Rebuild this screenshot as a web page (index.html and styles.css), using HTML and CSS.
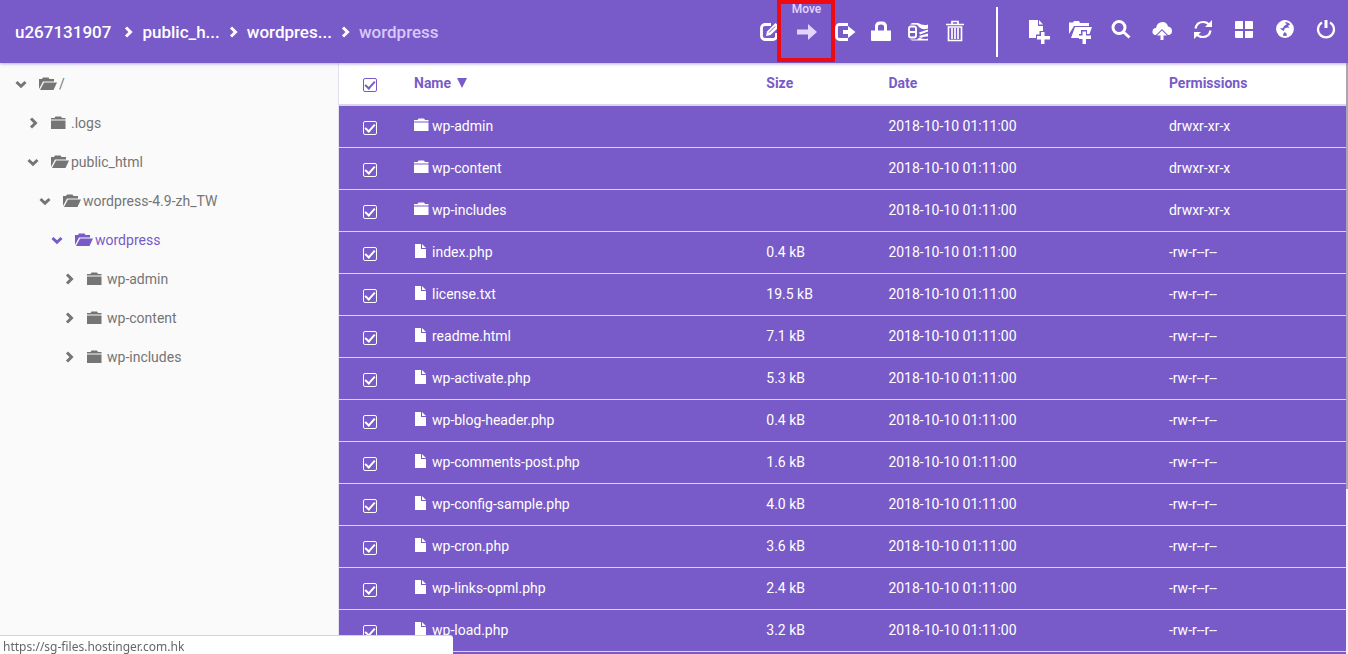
FILE: index.html
```html
<!DOCTYPE html>
<html lang="en">
<head>
<meta charset="utf-8">
<meta name="viewport" content="width=device-width, initial-scale=1">
<title>File manager</title>
<link rel="stylesheet" href="styles.css">
</head>
<body>
<svg class="sprite" aria-hidden="true">
  <symbol id="right" viewBox="0 0 12 12"><path d="M4 1.500 8.500 6 4 10.500" fill="none" stroke="currentColor" stroke-width="3"/></symbol>
  <symbol id="down" viewBox="0 0 12 12"><path d="M1.500 4 6 8.300 10.500 4" fill="none" stroke="currentColor" stroke-width="3"/></symbol>
  <symbol id="folder" viewBox="0 0 18 14"><path d="M0 3.500V2h3.500l1-1.500H10L11 2h3.500v1.500ZM0 4.500h14.500V13H0Z"/></symbol>
  <symbol id="open" viewBox="0 0 18 14"><path d="M0 12V2h3l1-1.500h5.500l1 1.500H15v2.500H4ZM5 5.500h13L14.500 13H1Z"/></symbol>
  <symbol id="file" viewBox="0 0 18 14"><path d="M1 0h6v5h5v9H1ZM8 0l4 4H8Z"/></symbol>
  <symbol id="edit" viewBox="0 0 24 24"><path d="M13 4.500H7A3.500 3.500 0 0 0 3.500 8v8A3.500 3.500 0 0 0 7 19.500h8a3.500 3.500 0 0 0 3.500-3.500v-3" fill="none" stroke="currentColor" stroke-width="2.800"/><path d="m8 16 1-4.500L17.500 3l4 3.500-9 8.500Z"/><path d="m11 12.500 6-6" stroke="#785bc8" stroke-width="1"/></symbol>
  <symbol id="move" viewBox="0 0 24 24"><path d="M2 9.500h11V4l9 8-9 8v-5.500H2Z"/></symbol>
  <symbol id="export" viewBox="0 0 24 24"><path d="M16 4.500H7.500a3 3 0 0 0-3 3v9a3 3 0 0 0 3 3H16" fill="none" stroke="currentColor" stroke-width="2.800"/><path d="M11 10h5V6l7.500 6-7.500 6v-4h-5Z"/></symbol>
  <symbol id="lock" viewBox="0 0 24 24"><path d="M2 10.500h4V6a4.500 4.500 0 0 1 4.500-4.500h3A4.500 4.500 0 0 1 18 6v4.500h4V20q0 1-1 1H3q-1 0-1-1ZM9 10.500h6V6.500Q15 4.500 12 4.500T9 6.500Z"/></symbol>
  <symbol id="rename" viewBox="0 0 24 24"><path d="M3 8.500q0-2 2-2h3q2 0 2 2v7q0 2-2 2H5q-2 0-2-2ZM3 12h7" fill="none" stroke="currentColor" stroke-width="1.900"/><path d="M4 4.500 6 3h6q5 3 10 1.500v4q-5 2-8.500-1L11 4.800ZM13 12.500l9-3v2l-8 3ZM13 16l9-2.500v3q-5-.5-7 1.500ZM4 19.500h7l2.500-2q4 2.500 8.500 1v2H6Z"/></symbol>
  <symbol id="trash" viewBox="0 0 24 24"><path d="M3 4.500h18M9 4V1.500h6V4M5.500 7h13v13.500h-13ZM9 8v11M12 8v11M15 8v11" fill="none" stroke="currentColor" stroke-width="1.700"/></symbol>
  <symbol id="newfile" viewBox="0 0 24 28"><path d="M2 4h9v6h5v5h-3.500v3.500H9V22H2ZM12 4l4 4.500h-4ZM14 16h3.500v4H23v3.500h-5.500V28H14v-4.500h-4V20h4Z"/></symbol>
  <symbol id="newfolder" viewBox="0 0 24 28"><path d="M1 18V6.500h4L6 5h5l1 2h9v3H6ZM7 11h17l-2.500 7H19v-4h-6v4h-2v4H3ZM14.500 15.500H18v4h5V23h-5v5h-3.500v-5H11v-3.500h3.500Z"/></symbol>
  <symbol id="search" viewBox="0 0 24 24"><path d="M16 9.500a6 6 0 1 1-12 0 6 6 0 0 1 12 0ZM14.500 14 20.500 19.500" fill="none" stroke="currentColor" stroke-width="3"/></symbol>
  <symbol id="upload" viewBox="0 0 24 24"><path d="M6 17Q2 17 2.500 13 3 10 6 10q1-6 6.500-6Q17 4 18 8.500q4 .5 4 4.500t-4 4l-6-6ZM12 12.500l5 5h-3.500V22h-3v-4.500H7Z"/></symbol>
  <symbol id="refresh" viewBox="0 0 24 24"><path d="M4.500 10.500q1-6.500 8-6.500 3.500 0 6 3M19.500 12.500q-1 6.500-8 6.500-3.500 0-6-3" fill="none" stroke="currentColor" stroke-width="2.200"/><path d="M21 2v7h-7ZM3 21v-7h7Z"/></symbol>
  <symbol id="grid" viewBox="0 0 24 24"><path d="M4 3h7v8H3V4q0-1 1-1ZM13 3h7q1 0 1 1v7h-8ZM3 13h8v7H4q-1 0-1-1ZM13 13h8v6q0 1-1 1h-7Z"/></symbol>
  <symbol id="globe" viewBox="0 0 24 24"><circle cx="12" cy="11" r="8" fill="none" stroke="currentColor" stroke-width="1.800"/><path d="m5 6 5-3.500h4L12 5l2 1-3 2-1 2-3 .5 2 1.500 3 1.500-1.500 2L9.500 19l-3-1-2-4-1-3ZM15 8l3-2.500 2 3v5l-3 4-3 1-.5-3-2.500-2 .5-3 3-1 2 .5Z"/></symbol>
  <symbol id="power" viewBox="0 0 24 24"><path d="M8 4.500a8 8 0 1 0 8 0" fill="none" stroke="currentColor" stroke-width="2.200"/><path d="M10.500 2h3v8h-3Z"/></symbol>
</svg>

<header class="topbar">
  <nav class="crumbs" aria-label="Path">
    <a href="#" class="root">u267131907</a><svg><use href="#right"/></svg>
    <a href="#">public_h...</a><svg><use href="#right"/></svg>
    <a href="#">wordpres...</a><svg><use href="#right"/></svg>
    <a href="#" class="current">wordpress</a>
  </nav>
  <div class="tools selection-tools">
    <button aria-label="Edit"><svg><use href="#edit"/></svg></button>
    <button class="active"><span class="tip">Move</span><svg><use href="#move"/></svg></button>
    <button aria-label="Copy"><svg><use href="#export"/></svg></button>
    <button aria-label="Permissions"><svg><use href="#lock"/></svg></button>
    <button aria-label="Archive"><svg><use href="#rename"/></svg></button>
    <button aria-label="Delete"><svg><use href="#trash"/></svg></button>
  </div>
  <div class="tools global-tools">
    <button aria-label="New file"><svg class="tall"><use href="#newfile"/></svg></button>
    <button aria-label="New folder"><svg class="tall"><use href="#newfolder"/></svg></button>
    <button aria-label="Search"><svg><use href="#search"/></svg></button>
    <button aria-label="Upload"><svg><use href="#upload"/></svg></button>
    <button aria-label="Refresh"><svg><use href="#refresh"/></svg></button>
    <button aria-label="Grid view"><svg><use href="#grid"/></svg></button>
    <button aria-label="Language"><svg><use href="#globe"/></svg></button>
    <button aria-label="Log out"><svg><use href="#power"/></svg></button>
  </div>
</header>

<div class="workspace">
  <aside class="sidebar">
    <ul class="tree">
      <li><a href="#"><svg class="chevron"><use href="#down"/></svg><svg class="icon"><use href="#open"/></svg>/</a>
        <ul>
          <li><a href="#"><svg class="chevron"><use href="#right"/></svg><svg class="icon"><use href="#folder"/></svg>.logs</a></li>
          <li><a href="#"><svg class="chevron"><use href="#down"/></svg><svg class="icon"><use href="#open"/></svg>public_html</a>
            <ul>
              <li><a href="#"><svg class="chevron"><use href="#down"/></svg><svg class="icon"><use href="#open"/></svg>wordpress-4.9-zh_TW</a>
                <ul>
                  <li><a href="#" class="selected"><svg class="chevron"><use href="#down"/></svg><svg class="icon"><use href="#open"/></svg>wordpress</a>
                    <ul>
                      <li><a href="#"><svg class="chevron"><use href="#right"/></svg><svg class="icon"><use href="#folder"/></svg>wp-admin</a></li>
                      <li><a href="#"><svg class="chevron"><use href="#right"/></svg><svg class="icon"><use href="#folder"/></svg>wp-content</a></li>
                      <li><a href="#"><svg class="chevron"><use href="#right"/></svg><svg class="icon"><use href="#folder"/></svg>wp-includes</a></li>
                    </ul>
                  </li>
                </ul>
              </li>
            </ul>
          </li>
        </ul>
      </li>
    </ul>
  </aside>
  <main class="files">
    <table>
      <colgroup><col class="c-check"><col class="c-name"><col class="c-size"><col class="c-date"><col class="c-perm"></colgroup>
      <thead>
        <tr><th><input type="checkbox" checked aria-label="Select all"></th><th>Name <svg class="sort" viewBox="0 0 10 10"><path d="M0 0h10L5 10Z"/></svg></th><th>Size</th><th>Date</th><th>Permissions</th></tr>
      </thead>
      <tbody>
        <tr><td><input type="checkbox" checked aria-label="wp-admin"></td><td><svg class="icon"><use href="#folder"/></svg>wp-admin</td><td></td><td>2018-10-10 01:11:00</td><td>drwxr-xr-x</td></tr>
        <tr><td><input type="checkbox" checked aria-label="wp-content"></td><td><svg class="icon"><use href="#folder"/></svg>wp-content</td><td></td><td>2018-10-10 01:11:00</td><td>drwxr-xr-x</td></tr>
        <tr><td><input type="checkbox" checked aria-label="wp-includes"></td><td><svg class="icon"><use href="#folder"/></svg>wp-includes</td><td></td><td>2018-10-10 01:11:00</td><td>drwxr-xr-x</td></tr>
        <tr><td><input type="checkbox" checked aria-label="index.php"></td><td><svg class="icon"><use href="#file"/></svg>index.php</td><td>0.4 kB</td><td>2018-10-10 01:11:00</td><td>-rw-r--r--</td></tr>
        <tr><td><input type="checkbox" checked aria-label="license.txt"></td><td><svg class="icon"><use href="#file"/></svg>license.txt</td><td>19.5 kB</td><td>2018-10-10 01:11:00</td><td>-rw-r--r--</td></tr>
        <tr><td><input type="checkbox" checked aria-label="readme.html"></td><td><svg class="icon"><use href="#file"/></svg>readme.html</td><td>7.1 kB</td><td>2018-10-10 01:11:00</td><td>-rw-r--r--</td></tr>
        <tr><td><input type="checkbox" checked aria-label="wp-activate.php"></td><td><svg class="icon"><use href="#file"/></svg>wp-activate.php</td><td>5.3 kB</td><td>2018-10-10 01:11:00</td><td>-rw-r--r--</td></tr>
        <tr><td><input type="checkbox" checked aria-label="wp-blog-header.php"></td><td><svg class="icon"><use href="#file"/></svg>wp-blog-header.php</td><td>0.4 kB</td><td>2018-10-10 01:11:00</td><td>-rw-r--r--</td></tr>
        <tr><td><input type="checkbox" checked aria-label="wp-comments-post.php"></td><td><svg class="icon"><use href="#file"/></svg>wp-comments-post.php</td><td>1.6 kB</td><td>2018-10-10 01:11:00</td><td>-rw-r--r--</td></tr>
        <tr><td><input type="checkbox" checked aria-label="wp-config-sample.php"></td><td><svg class="icon"><use href="#file"/></svg>wp-config-sample.php</td><td>4.0 kB</td><td>2018-10-10 01:11:00</td><td>-rw-r--r--</td></tr>
        <tr><td><input type="checkbox" checked aria-label="wp-cron.php"></td><td><svg class="icon"><use href="#file"/></svg>wp-cron.php</td><td>3.6 kB</td><td>2018-10-10 01:11:00</td><td>-rw-r--r--</td></tr>
        <tr><td><input type="checkbox" checked aria-label="wp-links-opml.php"></td><td><svg class="icon"><use href="#file"/></svg>wp-links-opml.php</td><td>2.4 kB</td><td>2018-10-10 01:11:00</td><td>-rw-r--r--</td></tr>
        <tr><td><input type="checkbox" checked aria-label="wp-load.php"></td><td><svg class="icon"><use href="#file"/></svg>wp-load.php</td><td>3.2 kB</td><td>2018-10-10 01:11:00</td><td>-rw-r--r--</td></tr>
        <tr><td></td><td></td><td></td><td></td><td></td></tr>
      </tbody>
    </table>
  </main>
  <div class="rail"><div class="thumb"></div></div>
</div>
<div class="status">https://sg-files.hostinger.com.hk</div>
</body>
</html>
```
FILE: styles.css
```css
*, *::before, *::after { box-sizing: border-box; }

body {
  margin: 0;
  height: 100vh;
  overflow: hidden;
  display: flex;
  flex-direction: column;
  font: 14px/20px Roboto, sans-serif;
  color: #757575;
  background: #fafafa;
}

a { color: inherit; text-decoration: none; }
svg { fill: currentColor; flex: none; }
.sprite { position: absolute; width: 0; height: 0; }

.topbar {
  display: flex;
  align-items: center;
  height: 63px;
  flex: none;
  padding: 0 2px 0 15px;
  background: #785bc8;
  color: #fff;
  box-shadow: 0 1px 3px #785bc880;
  position: relative;
}

.crumbs {
  display: flex;
  align-items: center;
  gap: 7px;
  margin-right: auto;
  font-size: 17px;
  font-weight: 500;
}
.crumbs svg { width: 12px; height: 12px; margin-right: 1px; }
.crumbs .root { margin-right: 4px; }
.crumbs .current { color: #d9c8fa; }

.tools { display: flex; align-items: center; }
.tools button {
  position: relative;
  display: flex;
  align-items: center;
  justify-content: center;
  height: 63px;
  padding: 0;
  border: 0;
  background: none;
  color: inherit;
  font: inherit;
}
.tools svg { width: 24px; height: 24px; }
.tools .tall { height: 28px; }

.selection-tools { padding-right: 23px; }
.selection-tools button { width: 37px; }
.selection-tools .active { color: #e3d5ff; }
.active::after {
  content: "";
  position: absolute;
  z-index: 1;
  top: 0;
  left: -11px;
  width: 58px;
  height: 62px;
  border: 4px solid #ee0a12;
}
.tip {
  position: absolute;
  top: 0;
  font-size: 12px;
  font-weight: 500;
  line-height: 18px;
}

.global-tools {
  height: 50px;
  padding-left: 20px;
  border-left: 2px solid #fff;
}
.global-tools button { width: 41px; height: 50px; padding-bottom: 3px; }

.workspace { display: flex; flex: 1; min-height: 0; }
.sidebar { width: 338px; flex: none; padding-top: 1px; }

.tree, .tree ul { list-style: none; margin: 0; padding: 0; }
.tree { padding-left: 15px; }
.tree ul { padding-left: 12px; }
.tree a { display: flex; align-items: center; height: 39px; }
.tree .selected { color: #785bc8; }
.chevron { width: 12px; height: 12px; margin-right: 12px; }
.icon { width: 18px; height: 14px; }
.tree .icon { margin-right: 2px; }

.files {
  flex: 1;
  min-width: 0;
  overflow: hidden;
  border-left: 1px solid #e6e1f0;
  background: #fff;
}
table {
  width: 100%;
  table-layout: fixed;
  border-spacing: 0;
  text-align: left;
}
.c-check { width: 75px; }
.c-name { width: 37.8%; }
.c-size { width: 13.1%; }
.c-date { width: 30.1%; }
.c-perm { width: 19%; }

th, td { height: 42px; padding: 0 0 2px; }
th {
  height: 43px;
  border-bottom: 2px solid #dcd6e8;
  color: #785bc8;
  font-weight: 700;
}
td {
  border-bottom: 1px solid #ded2f4;
  background: #785bc8;
  color: #fff;
}
td .icon { vertical-align: -1px; }
td:first-child, th:first-child { padding: 3px 0 0 24px; }
.sort { width: 10px; height: 10px; margin-left: 2px; }

input[type="checkbox"] {
  appearance: none;
  display: block;
  width: 14px;
  height: 14px;
  margin: 0;
  border: 1px solid currentColor;
  border-radius: 2px;
  color: inherit;
}
input[type="checkbox"]:checked::before {
  content: "";
  display: block;
  width: 6px;
  height: 10px;
  margin-left: 3px;
  border: solid currentColor;
  border-width: 0 2px 2px 0;
  transform: rotate(42deg);
}

.rail { width: 2px; flex: none; background: #f4f1fa; }
.thumb { height: 72%; background: #aaa5b3; }

.status {
  position: fixed;
  left: 0;
  bottom: 0;
  width: 453px;
  height: 19px;
  padding-left: 3px;
  border-top: 1px solid #d5d5d5;
  border-radius: 0 3px 0 0;
  background: #fff;
  color: #666;
  font: 12px/22px "Noto Sans", sans-serif;
}
```
